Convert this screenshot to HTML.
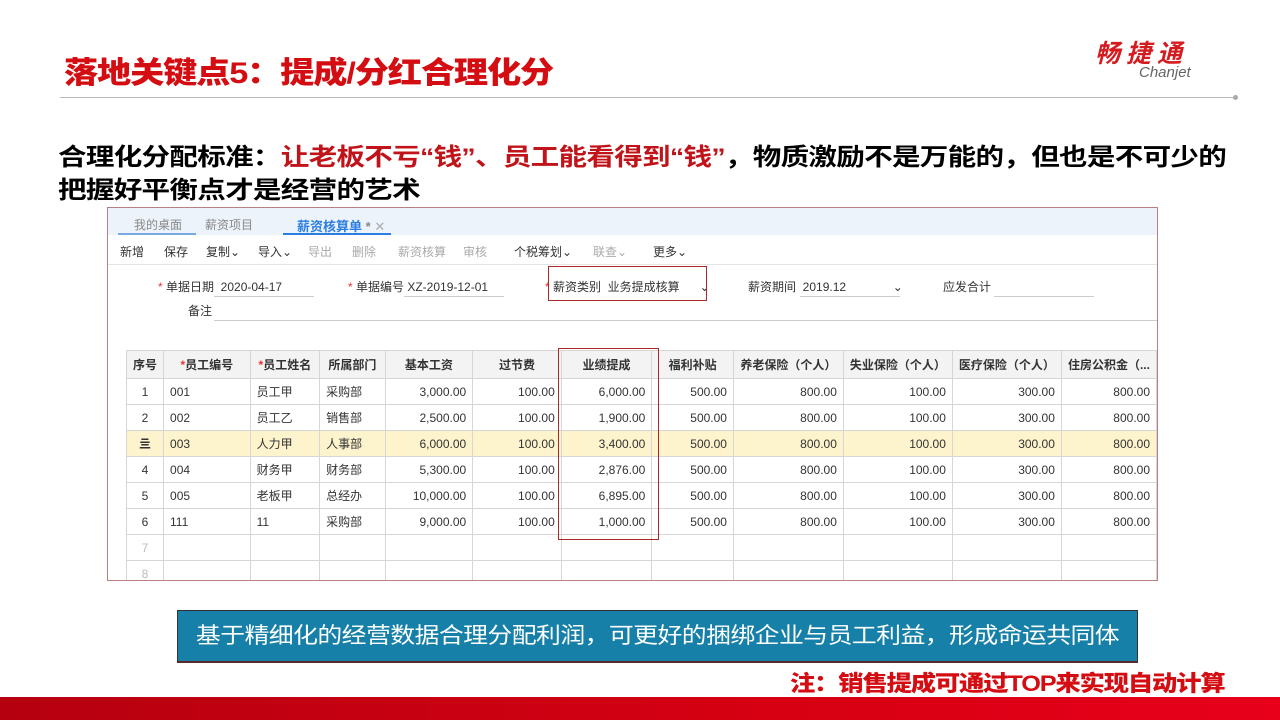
<!DOCTYPE html>
<html><head><meta charset="utf-8"><style>
*{margin:0;padding:0;box-sizing:border-box}
body{width:1280px;height:720px;background:#fff;position:relative;overflow:hidden;font-family:"Liberation Sans","Noto Sans CJK SC",sans-serif}
.abs{position:absolute}
.title{left:64px;top:48px;font-size:30px;font-weight:900;color:#d40d12;letter-spacing:-1px;white-space:nowrap;transform:scaleX(1.14);transform-origin:left top}
.sub{left:58px;font-size:24px;font-weight:700;color:#000;white-space:nowrap;letter-spacing:-0.6px;transform:scaleX(1.19);transform-origin:left top}
.red{color:#c0141a}
.shot{left:107px;top:207px;width:1051px;height:374px;border:1px solid #b88080;background:#fff;overflow:hidden;font-size:12px;color:#333}
.tabs{height:27px;background:#edf3fb;position:relative}
.tabs span{position:absolute;top:8px;color:#888}
.tb{height:30px;border-bottom:1px solid #e4e4e4;position:relative}
.tb span{position:absolute;top:8px}
.g{color:#aaa}
.f{position:absolute;font-size:12px}
.ul{position:absolute;height:1px;background:#ccc}
table{position:absolute;left:18px;top:142px;border-collapse:collapse;font-size:12px}
td,th{border:1px solid #d6d6d6;height:26px;padding:0 6px;white-space:nowrap}
th{background:#f3f3f3;font-weight:700;text-align:center;height:28px}
td.r{text-align:right}
td.c{text-align:center}
tr.y td{background:#fdf3cc}
.st{color:#e33}
.box{position:absolute;border:1px solid #a8282c}
.banner{left:177px;top:610px;width:961px;height:53px;background:#1780a8;border:1px solid #333;border-bottom:2px solid #5a2a2a;color:#fff;font-size:22px;line-height:50px;text-align:center;letter-spacing:-0.5px}
.banner span{display:inline-block;transform:scaleX(1.13)}
.note{left:790px;top:666px;font-size:22px;font-weight:900;color:#d40d12;letter-spacing:-1px;white-space:nowrap;transform:scaleX(1.15);transform-origin:left top}
.bar{left:0;top:697px;width:1280px;height:23px;background:linear-gradient(90deg,#b50010,#d60012 60%,#e8001a)}
</style></head><body>
<div class="abs title">落地关键点5：提成/分红合理化分</div>
<div class="abs" style="left:1095px;top:34px;font-size:25px;font-style:italic;font-weight:700;color:#d41b1f;letter-spacing:6px;white-space:nowrap">畅捷通</div>
<div class="abs" style="left:1139px;top:64px;font-size:15px;font-style:italic;color:#666">Chanjet</div>
<div class="abs" style="left:60px;top:97px;width:1175px;height:1px;background:#bbb"></div>
<div class="abs" style="left:1233px;top:95px;width:5px;height:5px;border-radius:50%;background:#aaa"></div>
<div class="abs sub" style="top:137px">合理化分配标准：<span class="red">让老板不亏“钱”、员工能看得到“钱”</span>，物质激励不是万能的，但也是不可少的</div>
<div class="abs sub" style="top:170px">把握好平衡点才是经营的艺术</div>

<div class="abs shot">
 <div class="tabs">
  <span style="left:26px">我的桌面</span><span style="left:97px">薪资项目</span>
  <span style="left:189px;color:#2a7de1;font-weight:700;font-size:13px">薪资核算单 <span class="st" style="position:static">*</span> <span style="position:static;color:#aaa;font-weight:400">✕</span></span>
  <div style="position:absolute;left:10px;top:25px;width:78px;height:2px;background:#7aa8e0"></div>
  <div style="position:absolute;left:175px;top:25px;width:108px;height:2px;background:#2a7de1"></div>
 </div>
 <div class="tb">
  <span style="left:12px">新增</span><span style="left:56px">保存</span><span style="left:98px">复制⌄</span><span style="left:150px">导入⌄</span>
  <span class="g" style="left:200px">导出</span><span class="g" style="left:244px">删除</span><span class="g" style="left:290px">薪资核算</span><span class="g" style="left:355px">审核</span>
  <span style="left:406px">个税筹划⌄</span><span class="g" style="left:485px">联查⌄</span><span style="left:545px">更多⌄</span>
 </div>
 <div class="f" style="left:50px;top:70px"><span class="st">*</span> 单据日期 &nbsp;2020-04-17</div><div class="ul" style="left:106px;top:88px;width:100px"></div>
 <div class="f" style="left:240px;top:70px"><span class="st">*</span> 单据编号 XZ-2019-12-01</div><div class="ul" style="left:296px;top:88px;width:100px"></div>
 <div class="f" style="left:437px;top:70px"><span class="st">*</span> 薪资类别 &nbsp;业务提成核算 &nbsp; &nbsp; &nbsp;⌄</div>
 <div class="f" style="left:640px;top:70px">薪资期间 &nbsp;2019.12 &nbsp; &nbsp; &nbsp; &nbsp; &nbsp; &nbsp; &nbsp;⌄</div><div class="ul" style="left:692px;top:88px;width:100px"></div>
 <div class="f" style="left:835px;top:70px">应发合计</div><div class="ul" style="left:886px;top:88px;width:100px"></div>
 <div class="f" style="left:80px;top:94px">备注</div><div class="ul" style="left:106px;top:112px;width:945px"></div>
 <table>
  <tr><th style="width:30px">序号</th><th style="width:89px"><span class="st">*</span>员工编号</th><th style="width:70px"><span class="st">*</span>员工姓名</th><th style="width:66px">所属部门</th><th style="width:90px">基本工资</th><th style="width:93px">过节费</th><th style="width:94px">业绩提成</th><th style="width:84px">福利补贴</th><th style="width:110px">养老保险（个人）</th><th style="width:105px">失业保险（个人）</th><th style="width:108px">医疗保险（个人）</th><th style="width:91px">住房公积金（...</th></tr>
  <tr><td class="c">1</td><td>001</td><td>员工甲</td><td>采购部</td><td class="r">3,000.00</td><td class="r">100.00</td><td class="r">6,000.00</td><td class="r">500.00</td><td class="r">800.00</td><td class="r">100.00</td><td class="r">300.00</td><td class="r">800.00</td></tr>
  <tr><td class="c">2</td><td>002</td><td>员工乙</td><td>销售部</td><td class="r">2,500.00</td><td class="r">100.00</td><td class="r">1,900.00</td><td class="r">500.00</td><td class="r">800.00</td><td class="r">100.00</td><td class="r">300.00</td><td class="r">800.00</td></tr>
  <tr class="y"><td class="c" style="font-weight:700">亖</td><td>003</td><td>人力甲</td><td>人事部</td><td class="r">6,000.00</td><td class="r">100.00</td><td class="r">3,400.00</td><td class="r">500.00</td><td class="r">800.00</td><td class="r">100.00</td><td class="r">300.00</td><td class="r">800.00</td></tr>
  <tr><td class="c">4</td><td>004</td><td>财务甲</td><td>财务部</td><td class="r">5,300.00</td><td class="r">100.00</td><td class="r">2,876.00</td><td class="r">500.00</td><td class="r">800.00</td><td class="r">100.00</td><td class="r">300.00</td><td class="r">800.00</td></tr>
  <tr><td class="c">5</td><td>005</td><td>老板甲</td><td>总经办</td><td class="r">10,000.00</td><td class="r">100.00</td><td class="r">6,895.00</td><td class="r">500.00</td><td class="r">800.00</td><td class="r">100.00</td><td class="r">300.00</td><td class="r">800.00</td></tr>
  <tr><td class="c">6</td><td>111</td><td>11</td><td>采购部</td><td class="r">9,000.00</td><td class="r">100.00</td><td class="r">1,000.00</td><td class="r">500.00</td><td class="r">800.00</td><td class="r">100.00</td><td class="r">300.00</td><td class="r">800.00</td></tr>
  <tr><td class="c" style="color:#bbb">7</td><td></td><td></td><td></td><td></td><td></td><td></td><td></td><td></td><td></td><td></td><td></td></tr>
  <tr><td class="c" style="color:#bbb">8</td><td></td><td></td><td></td><td></td><td></td><td></td><td></td><td></td><td></td><td></td><td></td></tr>
 </table>
 <div class="box" style="left:440px;top:58px;width:159px;height:35px"></div>
 <div class="box" style="left:450px;top:140px;width:101px;height:192px"></div>
</div>

<div class="abs banner"><span>基于精细化的经营数据合理分配利润，可更好的捆绑企业与员工利益，形成命运共同体</span></div>
<div class="abs note">注：销售提成可通过TOP来实现自动计算</div>
<div class="abs bar"></div>
</body></html>
